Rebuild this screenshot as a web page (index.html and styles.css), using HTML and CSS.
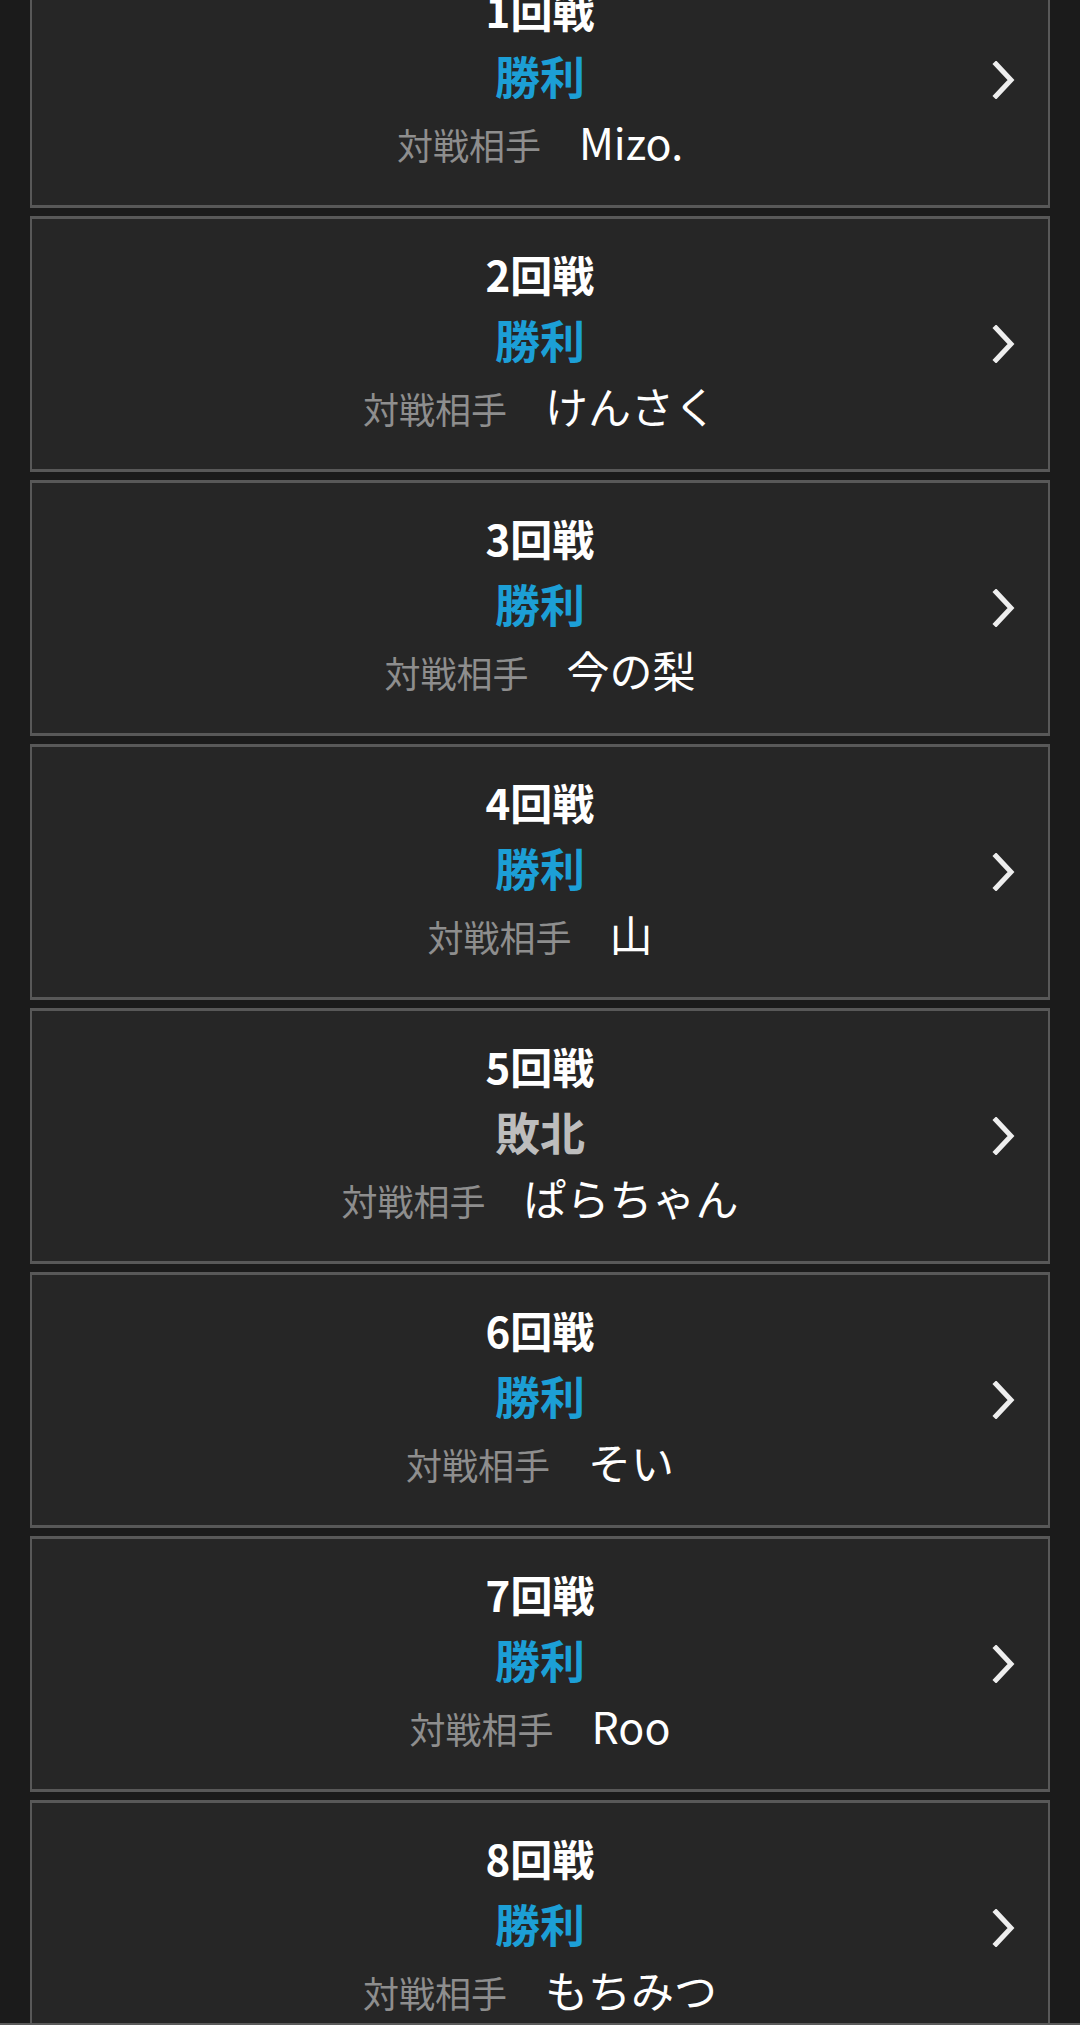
FILE: index.html
```html
<!DOCTYPE html>
<html lang="ja">
<head>
<meta charset="utf-8">
<title>対戦結果</title>
<link rel="stylesheet" href="styles.css">
</head>
<body>
<div class="screen">
  <div class="list">
    <div class="card">
      <div class="info">
        <div class="round">1回戦</div>
        <div class="result win">勝利</div>
        <div class="opp"><span class="label">対戦相手</span><span class="name">Mizo.</span></div>
      </div>
      <svg class="chev" viewBox="0 0 24 38"><path d="M4 3 L19 19 L4 35"/></svg>
    </div>
    <div class="card">
      <div class="info">
        <div class="round">2回戦</div>
        <div class="result win">勝利</div>
        <div class="opp"><span class="label">対戦相手</span><span class="name">けんさく</span></div>
      </div>
      <svg class="chev" viewBox="0 0 24 38"><path d="M4 3 L19 19 L4 35"/></svg>
    </div>
    <div class="card">
      <div class="info">
        <div class="round">3回戦</div>
        <div class="result win">勝利</div>
        <div class="opp"><span class="label">対戦相手</span><span class="name">今の梨</span></div>
      </div>
      <svg class="chev" viewBox="0 0 24 38"><path d="M4 3 L19 19 L4 35"/></svg>
    </div>
    <div class="card">
      <div class="info">
        <div class="round">4回戦</div>
        <div class="result win">勝利</div>
        <div class="opp"><span class="label">対戦相手</span><span class="name">山</span></div>
      </div>
      <svg class="chev" viewBox="0 0 24 38"><path d="M4 3 L19 19 L4 35"/></svg>
    </div>
    <div class="card">
      <div class="info">
        <div class="round">5回戦</div>
        <div class="result lose">敗北</div>
        <div class="opp"><span class="label">対戦相手</span><span class="name">ぱらちゃん</span></div>
      </div>
      <svg class="chev" viewBox="0 0 24 38"><path d="M4 3 L19 19 L4 35"/></svg>
    </div>
    <div class="card">
      <div class="info">
        <div class="round">6回戦</div>
        <div class="result win">勝利</div>
        <div class="opp"><span class="label">対戦相手</span><span class="name">そい</span></div>
      </div>
      <svg class="chev" viewBox="0 0 24 38"><path d="M4 3 L19 19 L4 35"/></svg>
    </div>
    <div class="card">
      <div class="info">
        <div class="round">7回戦</div>
        <div class="result win">勝利</div>
        <div class="opp"><span class="label">対戦相手</span><span class="name">Roo</span></div>
      </div>
      <svg class="chev" viewBox="0 0 24 38"><path d="M4 3 L19 19 L4 35"/></svg>
    </div>
    <div class="card">
      <div class="info">
        <div class="round">8回戦</div>
        <div class="result win">勝利</div>
        <div class="opp"><span class="label">対戦相手</span><span class="name">もちみつ</span></div>
      </div>
      <svg class="chev" viewBox="0 0 24 38"><path d="M4 3 L19 19 L4 35"/></svg>
    </div>
  </div>
</div>
</body>
</html>
```

FILE: styles.css
```css
html, body {
  margin: 0;
  padding: 0;
  background: #ffffff;
}

body {
  font-family: "Noto Sans CJK JP", "Noto Sans", sans-serif;
}

.screen {
  height: 2023px;
  overflow: hidden;
  background: #1b1b1b;
  border-bottom: 2px solid #5a5a5a;
}

.list {
  margin-top: -48px;
  padding: 0 30px;
  display: flex;
  flex-direction: column;
  gap: 8px;
}

.card {
  box-sizing: border-box;
  height: 256px;
  background: #262626;
  border-style: solid;
  border-color: #585858;
  border-width: 3px 2px;
  display: grid;
  grid-template-columns: 1fr auto 1fr;
  align-items: center;
}

.info {
  grid-column: 2;
  display: flex;
  flex-direction: column;
  align-items: center;
  padding-bottom: 8px;
}

.round {
  font-size: 42px;
  font-weight: 700;
  line-height: 66px;
  color: #ffffff;
}

.result {
  font-size: 45px;
  font-weight: 700;
  line-height: 66px;
}

.result.win {
  color: #1c9fd6;
}

.result.lose {
  color: #bdbdbd;
}

.opp {
  display: flex;
  align-items: baseline;
  gap: 38px;
  line-height: 64px;
}

.label {
  font-size: 36px;
  color: #8e8e8e;
}

.name {
  font-size: 43px;
  color: #ffffff;
}

.chev {
  grid-column: 3;
  justify-self: end;
  width: 24px;
  height: 38px;
  margin-right: 32px;
  fill: none;
  stroke: #eeeeee;
  stroke-width: 5;
  stroke-linecap: square;
  stroke-linejoin: miter;
}
```
